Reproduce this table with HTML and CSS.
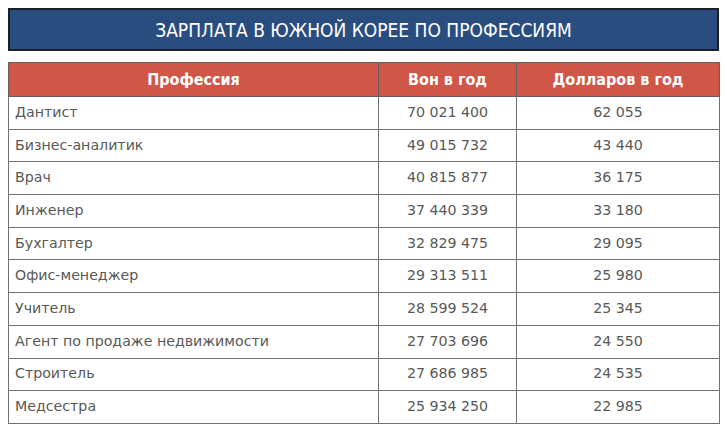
FILE: index.html
```html
<!DOCTYPE html>
<html lang="ru">
<head>
<meta charset="utf-8">
<link rel="stylesheet" href="styles.css">
</head>
<body>
<div class="title">ЗАРПЛАТА В ЮЖНОЙ КОРЕЕ ПО ПРОФЕССИЯМ</div>
<table class="salary">
  <colgroup><col class="c1"><col class="c2"><col class="c3"></colgroup>
  <thead>
    <tr><th>Профессия</th><th>Вон в год</th><th>Долларов в год</th></tr>
  </thead>
  <tbody>
    <tr><td>Дантист</td><td>70 021 400</td><td>62 055</td></tr>
    <tr><td>Бизнес-аналитик</td><td>49 015 732</td><td>43 440</td></tr>
    <tr><td>Врач</td><td>40 815 877</td><td>36 175</td></tr>
    <tr><td>Инженер</td><td>37 440 339</td><td>33 180</td></tr>
    <tr><td>Бухгалтер</td><td>32 829 475</td><td>29 095</td></tr>
    <tr><td>Офис-менеджер</td><td>29 313 511</td><td>25 980</td></tr>
    <tr><td>Учитель</td><td>28 599 524</td><td>25 345</td></tr>
    <tr><td>Агент по продаже недвижимости</td><td>27 703 696</td><td>24 550</td></tr>
    <tr><td>Строитель</td><td>27 686 985</td><td>24 535</td></tr>
    <tr><td>Медсестра</td><td>25 934 250</td><td>22 985</td></tr>
  </tbody>
</table>
</body>
</html>
```
FILE: styles.css
```css
html, body { margin: 0; padding: 0; background: #ffffff; }
body { padding: 8px 8px 0 8px; font-family: "DejaVu Sans", Verdana, sans-serif; }

.title {
  box-sizing: border-box;
  width: 711px;
  height: 43px;
  background: #2a4d80;
  border: 2px solid #1b1f27;
  color: #ffffff;
  font-family: "DejaVu Sans Condensed", "Liberation Sans Narrow", sans-serif;
  font-stretch: condensed;
  font-size: 19px;
  display: flex;
  align-items: center;
  justify-content: center;
}

.salary {
  margin-top: 11px;
  width: 711px;
  border-collapse: collapse;
  table-layout: fixed;
}
.c1 { width: 370px; }
.c2 { width: 138px; }
.c3 { width: 203px; }

.salary th {
  background: #d05747;
  color: #ffffff;
  font-family: "DejaVu Sans Condensed", "Liberation Sans Narrow", sans-serif;
  font-stretch: condensed;
  font-weight: bold;
  font-size: 16px;
  height: 33px;
  padding: 0;
  border: 1px solid #6a5a58;
  text-align: center;
}

.salary td {
  height: 32.7px;
  padding: 0 0 2px 6px;
  box-sizing: border-box;
  border: 1px solid #6e7276;
  color: #585858;
  font-size: 14.2px;
  text-align: center;
}
.salary td:first-child { text-align: left; }
.salary td + td { padding: 0 0 2px 0; }
```
